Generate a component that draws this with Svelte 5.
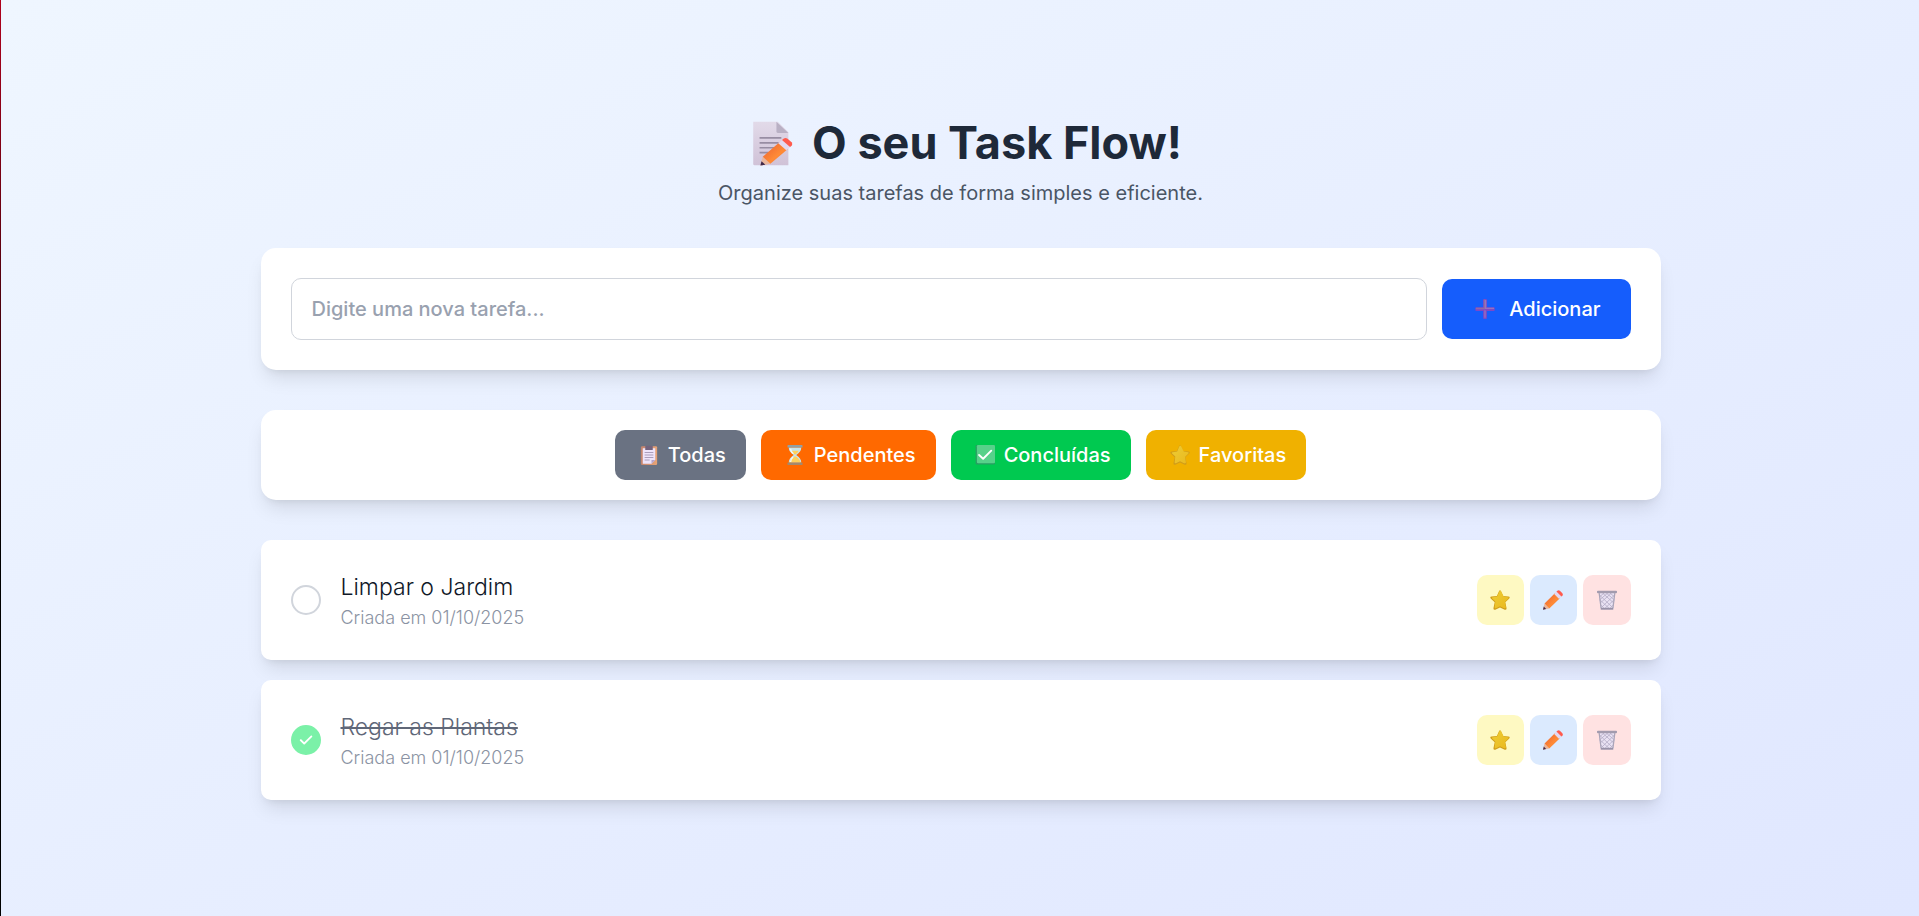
<script>
  let draft = $state('');
  let filter = $state('todas');
  let tasks = $state([
    { id: 1, title: 'Limpar o Jardim', date: '01/10/2025', done: false },
    { id: 2, title: 'Regar as Plantas', date: '01/10/2025', done: true }
  ]);

  const filters = [
    { key: 'todas', label: 'Todas', icon: 'clipboard' },
    { key: 'pendentes', label: 'Pendentes', icon: 'hourglass' },
    { key: 'concluidas', label: 'Concluídas', icon: 'check' },
    { key: 'favoritas', label: 'Favoritas', icon: 'star' }
  ];

  const visible = $derived(
    tasks.filter((t) =>
      filter === 'pendentes' ? !t.done : filter === 'concluidas' ? t.done : filter === 'favoritas' ? t.favorite : true
    )
  );

  function add(event) {
    event.preventDefault();
    const title = draft.trim();
    if (!title) return;
    tasks.push({ id: Date.now(), title, date: new Date().toLocaleDateString('pt-BR'), done: false });
    draft = '';
  }

  function rename(task) {
    const title = prompt('', task.title);
    if (title) task.title = title;
  }
</script>

{#snippet pencilShape()}
  <path d="M0 31.500 2.500 21.500 10 29.500Z" fill="#eab69c" />
  <path d="M0 31.500 1.300 26.500 5 30.500Z" fill="#402a4a" />
  <path d="M2.500 21.500 19 5 27 13 10 29.500Z" fill="url(#pencil-body)" />
  <path d="M17.800 6.200 22 2 30 10 25.800 14.200Z" fill="#e3d9f0" />
  <path d="M21.500 2.500 23 1Q25 -.500 27 1L31 5Q32.500 7 31 9L29.500 10.500Z" fill="#ff5b4d" />
{/snippet}

{#snippet icon(name)}
  <svg class="icon" viewBox="0 0 32 32" aria-hidden="true">
    {#if name === 'memo'}
      <path d="M3 .500H20.500L28 8V31.500H4Q3 31.500 3 30.500Z" fill="url(#paper)" />
      <path d="M19.500 .500 28 8.500H20.500Q19.500 8.500 19.500 7.500Z" fill="#b9b0c4" />
      <path d="M7.500 12H23M7.500 15.500H21M7.500 19H18M7.500 22.500H14" stroke="#988da3" stroke-width="1.200" />
      <svg x="8" y="12" width="23" height="20" viewBox="0 0 32 32" preserveAspectRatio="none">{@render pencilShape()}</svg>
    {:else if name === 'pencil'}
      {@render pencilShape()}
    {:else if name === 'plus'}
      <path d="M13 1.500Q13 0 14.500 0H17.500Q19 0 19 1.500V13H30Q31.500 13 31.500 14.500V17.500Q31.500 19 30 19H19V30Q19 32 17.500 32H14.500Q13 32 13 30V19H2Q.500 19 .500 17.500V14.500Q.500 13 2 13H13Z" fill="#7e48c6" />
      <path d="M14 1V14H1.500V16.500H16V1Z" fill="#8f6ba5" />
      <path d="M17 1.500V15H30.500M16 18V30" fill="none" stroke="#9673bd" stroke-width="2" />
    {:else if name === 'clipboard'}
      <rect x="3" y="2" width="26" height="30" rx="2" fill="url(#board)" />
      <path d="M6 5H26V24L20 30H6Z" fill="#eee4fa" />
      <path d="M20 30V24H26Z" fill="#b5a4cb" />
      <path d="M9 12H23M9 16H23M9 20H23M9 24H17" stroke="#a699b7" stroke-width="1.500" />
      <path d="M10 2Q10 1 12 1H20Q22 1 22 2V8H10Z" fill="#72637e" />
    {:else if name === 'hourglass'}
      <path d="M6 4H26Q26 11 18 16Q26 21 26 28H6Q6 21 14 16Q6 11 6 4Z" fill="#c7e5ec" />
      <path d="M10 9H22Q20 13 16 15.500Q12 13 10 9ZM16 18Q23 21 25 28H7Q9 21 16 18Z" fill="#ffd15c" />
      <path d="M9 6Q9 11 13.500 14M13 19Q9 22 9 27" fill="none" stroke="#eefaff" stroke-width="2" />
      <rect x="4" y="0" width="24" height="4" rx="1" fill="#91a0a5" />
      <rect x="4" y="28" width="24" height="4" rx="1" fill="#a3896e" />
    {:else if name === 'check'}
      <rect x="1" y="0" width="31" height="31" rx="2" fill="#299c62" />
      <rect x="3" y="0" width="29" height="29" rx="2" fill="#57d18a" />
      <path d="M6.500 16 13 22 26 9" fill="none" stroke="#fff" stroke-width="3" stroke-linecap="round" stroke-linejoin="round" />
    {:else if name === 'star'}
      <path d="M14.400 2Q16 -1 17.600 2L21 9.500 29.500 10.500Q33 11 30.500 14L24.500 19.500 26.500 29Q26.500 32.500 23.500 31.500L16 28 8.500 31.500Q5.500 32.500 5.500 29L7.500 19.500 1.500 14Q-1 11 2.500 10.500L11 9.500Z" fill="#d09d1a" />
      <path d="M15 2Q16.500 0 18 2.500L22 10.500 29 11.500Q31 12 29.500 13.500L24 19 25.500 28Q25 30 22.500 29L16 26 9.500 29Q7 29.500 7.500 27L8.500 18.500 3 13Q2.500 11.500 4.500 11.500L11.500 10.500Z" fill="url(#gold)" />
    {:else if name === 'trash'}
      <path d="M3 4H29L26.500 30Q26.500 31 25 31H7Q5.500 31 5.500 30Z" fill="#e9e2f3" />
      <path d="M5 9 25 28M9 5 27 21M15 5 28 16M21 5 28 11M5 16 20 30M6 24 12 30M27 9 7 28M23 5 5 21M17 5 4 16M11 5 4 11M27 16 12 30M26 24 20 30" stroke="#b4acc6" stroke-width="1.300" />
      <path d="M3.500 5 6.500 29M28.500 5 25.500 29" stroke="#aaa4b8" stroke-width="2" />
      <path d="M6 30H26" stroke="#9891a7" stroke-width="3" />
      <rect x="0" y="1" width="32" height="4" rx="1.500" fill="#a29bae" />
    {/if}
  </svg>
{/snippet}

<svg class="defs" aria-hidden="true">
  <defs>
    <linearGradient id="pencil-body" x1="0" y1="0" x2="1" y2="1">
      <stop offset=".2" stop-color="#f06c32" />
      <stop offset=".6" stop-color="#ff8b36" />
      <stop offset="1" stop-color="#ee692d" />
    </linearGradient>
    <linearGradient id="paper" x1="0" y1="0" x2="0" y2="1">
      <stop offset="0" stop-color="#e2dae9" />
      <stop offset="1" stop-color="#d0c2d7" />
    </linearGradient>
    <linearGradient id="board">
      <stop offset="0" stop-color="#c3846e" />
      <stop offset="1" stop-color="#e8a476" />
    </linearGradient>
    <linearGradient id="gold" x1="0" y1="0" x2="1" y2="1">
      <stop offset="0" stop-color="#edcc35" />
      <stop offset="1" stop-color="#eab91e" />
    </linearGradient>
  </defs>
</svg>

<div class="page">
  <main>
    <header>
      <h1>{@render icon('memo')}<span>O seu Task Flow!</span></h1>
      <p>Organize suas tarefas de forma simples e eficiente.</p>
    </header>

    <form class="panel composer" onsubmit={add}>
      <input type="text" bind:value={draft} placeholder="Digite uma nova tarefa..." aria-label="Nova tarefa" />
      <button type="submit" class="add">{@render icon('plus')}<span>Adicionar</span></button>
    </form>

    <nav class="panel filters">
      {#each filters as f (f.key)}
        <button type="button" class={f.key} onclick={() => (filter = f.key)}>{@render icon(f.icon)}<span>{f.label}</span></button>
      {/each}
    </nav>

    <ul>
      {#each visible as task (task.id)}
        <li class="task" class:done={task.done}>
          <input type="checkbox" id="task-{task.id}" bind:checked={task.done} />
          <div class="info">
            <label for="task-{task.id}">{task.title}</label>
            <p>Criada em {task.date}</p>
          </div>
          <div class="actions">
            <button type="button" class="favorite" aria-label="Favoritar" onclick={() => (task.favorite = !task.favorite)}>{@render icon('star')}</button>
            <button type="button" class="edit" aria-label="Editar" onclick={() => rename(task)}>{@render icon('pencil')}</button>
            <button type="button" class="remove" aria-label="Excluir" onclick={() => (tasks = tasks.filter((t) => t.id !== task.id))}>{@render icon('trash')}</button>
          </div>
        </li>
      {/each}
    </ul>
  </main>
</div>

<style>
  :global(body) {
    margin: 0;
  }
  .defs {
    position: absolute;
    width: 0;
    height: 0;
  }
  .page,
  .page * {
    box-sizing: border-box;
  }
  .page {
    min-height: 100vh;
    padding: 118px 20px 40px 21px;
    border-left: 1px solid;
    border-image: linear-gradient(#b0001c, #000 60%) 1;
    background: linear-gradient(to bottom right in oklab, #eff6ff, #e0e7ff);
    font: 400 20px/30px Inter, 'Liberation Sans', sans-serif;
    color: #1e2939;
  }
  main {
    max-width: 1400px;
    margin: 0 auto;
  }
  h1,
  p,
  ul {
    margin: 0;
    padding: 0;
  }
  header {
    margin-bottom: 40px;
    text-align: center;
  }
  h1 {
    display: flex;
    align-items: center;
    justify-content: center;
    gap: 18px;
    margin-bottom: 10px;
    padding-left: 10px;
    font-size: 45px;
    line-height: 50px;
    font-weight: 700;
  }
  header p {
    color: #4a5565;
  }
  .icon {
    flex: none;
    width: 20px;
    height: 20px;
  }
  h1 .icon {
    width: 45px;
    height: 45px;
  }
  .panel {
    margin-bottom: 40px;
    border-radius: 15px;
    background: #fff;
  }
  .panel,
  .task {
    box-shadow: 0 12px 19px -4px rgb(0 0 0 / 0.1), 0 5px 8px -5px rgb(0 0 0 / 0.1);
  }
  button {
    display: flex;
    align-items: center;
    justify-content: center;
    border: 0;
    border-radius: 10px;
    color: #fff;
    font: inherit;
    font-weight: 500;
    cursor: pointer;
  }
  .composer {
    display: flex;
    align-items: center;
    gap: 15px;
    padding: 30px;
  }
  .composer input {
    flex: 1;
    min-width: 0;
    height: 62px;
    padding: 0 20px;
    border: 1px solid #d1d5dc;
    border-radius: 10px;
    background: #fff;
    color: inherit;
    font: inherit;
    font-weight: 500;
  }
  .composer input::placeholder {
    color: #99a1af;
    opacity: 1;
  }
  .add {
    gap: 14px;
    height: 60px;
    padding: 0 30px 0 33px;
    background: #155dfc;
  }
  .filters {
    display: flex;
    flex-wrap: wrap;
    justify-content: center;
    gap: 15px;
    padding: 20px;
  }
  .filters button {
    gap: 9px;
    height: 50px;
    padding: 0 20px 0 24px;
  }
  .todas {
    background: #6a7282;
  }
  .pendentes {
    background: #ff6900;
  }
  .concluidas {
    background: #00c950;
  }
  .favoritas {
    background: #f0b100;
  }
  ul {
    display: grid;
    gap: 20px;
    list-style: none;
  }
  .task {
    display: flex;
    align-items: center;
    gap: 20px;
    padding: 30px;
    border-radius: 10px;
    background: #fff;
  }
  .task input {
    appearance: none;
    flex: none;
    width: 30px;
    height: 30px;
    margin: 0;
    border: 2px solid #d1d5dc;
    border-radius: 50%;
  }
  .task input:checked {
    border-color: #7bf1a8;
    background: #7bf1a8 url("data:image/svg+xml,%3Csvg xmlns='http://www.w3.org/2000/svg' viewBox='0 0 20 20' fill='white'%3E%3Cpath d='M16.700 5.300a1 1 0 0 1 0 1.400l-8 8a1 1 0 0 1-1.400 0l-4-4a1 1 0 0 1 1.400-1.400L8 12.600l7.300-7.300a1 1 0 0 1 1.400 0z'/%3E%3C/svg%3E") center / 18px 18px no-repeat;
  }
  .info {
    flex: 1;
    min-width: 0;
    font-weight: 300;
  }
  .info label {
    display: block;
    color: #101828;
    font-size: 23px;
    line-height: 35px;
  }
  .info p {
    color: #8b93a3;
    font-size: 18px;
    line-height: 25px;
  }
  .done .info label {
    color: #5f6778;
    text-decoration: line-through 2px;
  }
  .actions {
    display: flex;
    gap: 6px;
  }
  .actions button {
    width: 47px;
    height: 50px;
    padding: 0;
  }
  .actions .remove {
    width: 48px;
  }
  .favorite {
    background: #fef9c2;
  }
  .edit {
    background: #dbeafe;
  }
  .remove {
    background: #ffe2e2;
  }
</style>
